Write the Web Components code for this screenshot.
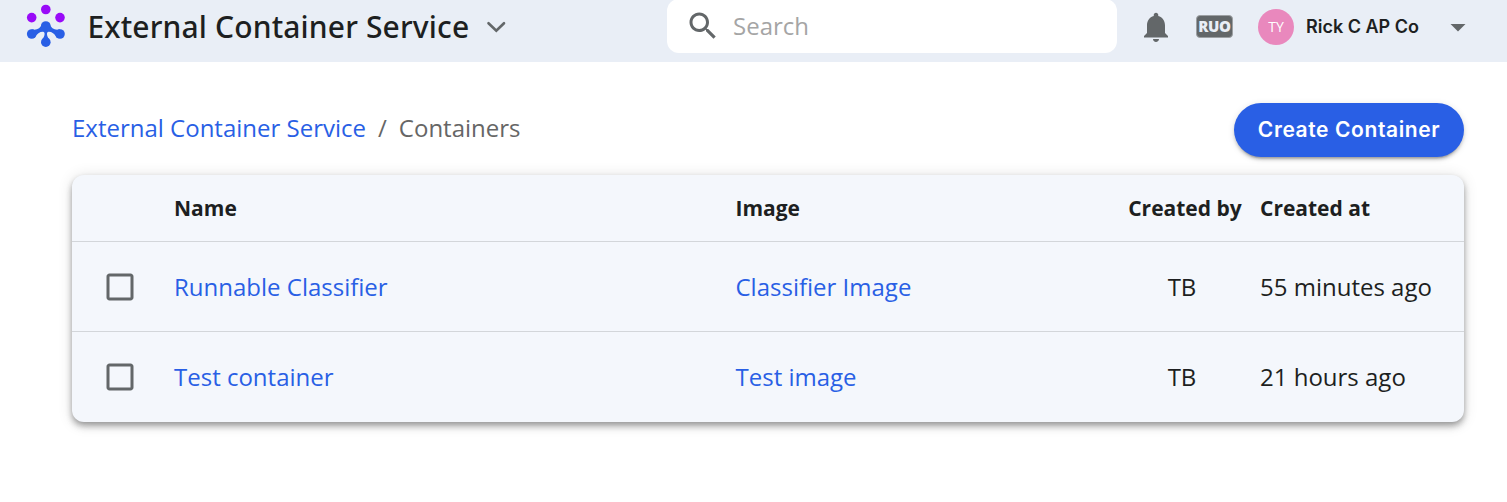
<!DOCTYPE html>
<html lang="en"><head><meta charset="utf-8"><title>External Container Service</title>
<style>body{margin:0;background:#fff;font-family:"Open Sans","Noto Sans",sans-serif;color:#1d1f21;overflow:hidden}</style></head><body>
<service-page></service-page>
<script>
const define=(name,html)=>customElements.define(name,class extends HTMLElement{
  constructor(){super();const t=document.createElement('template');t.innerHTML=html;
    this.attachShadow({mode:'open'}).append(t.content.cloneNode(true));}
});

define('brand-logo',`<style>:host{display:block;width:40px;height:44px;margin-top:-3px}svg{display:block}</style>
<svg width="40" height="44" viewBox="0 0 40 44"><g fill="#990af8"><circle cx="19.8" cy="6.5" r="4.8"/><circle cx="5.7" cy="14.6" r="4.8"/><circle cx="34" cy="14.6" r="4.8"/></g>
<g fill="#295fe5"><circle cx="19.8" cy="23" r="4.8"/><circle cx="5.7" cy="31" r="4.8"/><circle cx="34" cy="31" r="4.8"/><circle cx="19.8" cy="39.2" r="4.8"/>
<path d="M16 20.5C14.5 26 10 27.5 5.5 26.2L8.8 34.8C11 30.5 14 28.7 17 28.8C19.3 29 19.2 33 16.2 36.5H23.4C20.4 33 20.3 29 22.6 28.8C25.6 28.7 28.6 30.5 30.8 34.8L34.1 26.2C29.6 27.5 25.1 26 23.6 20.5Z"/></g></svg>`);

define('app-icon',`<style>:host{display:block;width:36px;height:36px;color:#636769}svg{display:block;width:100%;height:100%;fill:currentColor}</style><svg viewBox="0 0 24 24"><path/></svg>`);
const paths={
 search:'M15.5 14h-.79l-.28-.27C15.41 12.59 16 11.11 16 9.5 16 5.91 13.09 3 9.5 3S3 5.91 3 9.5 5.91 16 9.5 16c1.61 0 3.09-.59 4.23-1.57l.27.28v.79l5 4.99L20.49 19l-4.99-5zm-6 0C7.01 14 5 11.99 5 9.5S7.01 5 9.5 5 14 7.01 14 9.5 11.99 14 9.5 14z',
 bell:'M12 22c1.1 0 2-.9 2-2h-4c0 1.1.89 2 2 2zm6-6v-5c0-3.07-1.64-5.64-4.5-6.32V4c0-.83-.67-1.5-1.5-1.5s-1.5.67-1.5 1.5v.68C7.63 5.36 6 7.92 6 11v5l-2 2v1h16v-1l-2-2z',
 caret:'M7 10l5 5 5-5z',
 box:'M19 5v14H5V5h14m0-2H5c-1.1 0-2 .9-2 2v14c0 1.1.9 2 2 2h14c1.1 0 2-.9 2-2V5c0-1.1-.9-2-2-2z'};
const fillIcons=root=>root.querySelectorAll('app-icon').forEach(i=>i.shadowRoot.querySelector('path').setAttribute('d',paths[i.getAttribute('name')]));

define('search-field',`<style>:host{display:flex;align-items:center;box-sizing:border-box;width:450px;height:54px;margin-top:-1px;padding-left:18px;background:#fff;border-radius:12px}
span{margin-left:12px;font-size:24px;line-height:36px;color:#a5a5a5}</style><slot></slot><span>Search</span>`);

define('app-header',`<style>:host{display:flex;box-sizing:border-box;height:62px;padding-left:26px;background:#e9eef6}
.brand{display:flex;width:641px;height:53px;align-items:center}
h1{margin:0 0 0 21.4px;font:500 30px/40px "Noto Sans","Open Sans",sans-serif;letter-spacing:.15px;white-space:nowrap}
.chev{margin-left:17px}
.tools{display:flex;align-items:center;height:53px;margin-left:21px}
.ruo{box-sizing:border-box;width:37px;height:23px;margin-left:22px;border:1px solid #9da0a3;border-radius:4px;background:#636769;color:#e9eef6;font-weight:800;font-size:15px;line-height:21px;letter-spacing:-.4px;text-align:center}
.av{width:36px;height:36px;margin-left:25px;border-radius:50%;background:#e988bd;color:#fff;font-size:14px;line-height:35px;text-align:center}
.user{width:134px;margin-left:12px;font:600 18px/28px Inter,sans-serif;white-space:nowrap}
search-field app-icon{flex:none}</style>
<div class="brand"><brand-logo></brand-logo><h1>External Container Service</h1><svg class="chev" width="20" height="14" viewBox="0 0 20 14"><path d="M2.5 3.2L10.3 10.8L18 3.2" fill="none" stroke="#636769" stroke-width="2.6" stroke-linecap="round"/></svg></div>
<search-field><app-icon name="search"></app-icon></search-field>
<div class="tools"><app-icon name="bell"></app-icon><span class="ruo">RUO</span><span class="av">TY</span><span class="user">Rick C AP Co</span><app-icon name="caret"></app-icon></div>`);

define('primary-button',`<style>:host{display:block}button{display:block;width:230px;height:54px;padding:0;border:0;border-radius:27px;background:#295fe5;color:#fff;font:600 21px/54px Inter,sans-serif;letter-spacing:.6px;box-shadow:0 4.5px 1.5px -3px rgba(0,0,0,.2),0 3px 3px rgba(0,0,0,.14),0 1.5px 7.5px rgba(0,0,0,.12)}</style><button><slot></slot></button>`);

define('crumb-trail',`<style>:host{display:flex;font-size:24px;line-height:36px;color:#666;white-space:pre}a{color:#295fe5}i{font-style:normal;margin:0 12px}</style><a>External Container Service</a><i>/</i><span>Containers</span>`);

define('table-row',`<style>:host{display:grid;grid-template-columns:102px 561.5px 374.5px 144px 150px;align-items:center;box-sizing:border-box;height:90px;border-top:1px solid #d3d6da;font-size:24px;line-height:36px;white-space:nowrap}
:host([head]){height:66px;border:0;font-size:21px;font-weight:700;line-height:32px}
.link{color:#295fe5}:host([head]) .link{color:inherit}
.check{padding-left:30px}.by{text-align:center}:host([head]) .by{padding-left:6px}.at{padding-left:6px}</style>
<div class="check"><slot name="check"></slot></div><div class="link"><slot name="name"></slot></div><div class="link"><slot name="image"></slot></div><div class="by"><slot name="by"></slot></div><div class="at"><slot name="at"></slot></div>`);

define('container-table',`<style>:host{display:block;height:247px;border-radius:12px;background:#f4f7fc;box-shadow:0 3px 6px -1.5px rgba(0,0,0,.28),0 5px 7px rgba(0,0,0,.16),0 1.5px 15px rgba(0,0,0,.12)}</style>
<table-row head><span slot="name">Name</span><span slot="image">Image</span><span slot="by">Created by</span><span slot="at">Created at</span></table-row>
<table-row><app-icon slot="check" name="box"></app-icon><span slot="name">Runnable Classifier</span><span slot="image">Classifier Image</span><span slot="by">TB</span><span slot="at">55 minutes ago</span></table-row>
<table-row><app-icon slot="check" name="box"></app-icon><span slot="name">Test container</span><span slot="image">Test image</span><span slot="by">TB</span><span slot="at">21 hours ago</span></table-row>`);

define('service-page',`<style>:host{display:block;height:502px;background:#fff}main{padding:41px 43px 0 72px}.bar{display:flex;justify-content:space-between;height:72px}crumb-trail{margin-top:7px}</style>
<app-header></app-header><main><div class="bar"><crumb-trail></crumb-trail><primary-button>Create Container</primary-button></div><container-table></container-table></main>`);

const walk=root=>{fillIcons(root);root.querySelectorAll('*').forEach(e=>e.shadowRoot&&walk(e.shadowRoot));};
walk(document);
</script></body></html>
